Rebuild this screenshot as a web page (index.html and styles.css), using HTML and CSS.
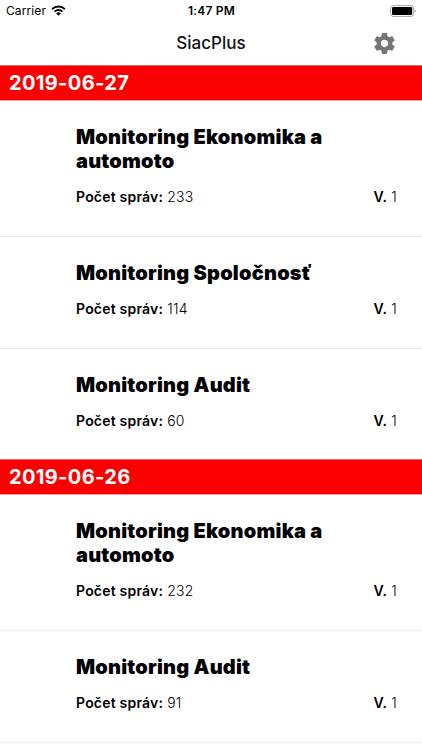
FILE: index.html
```html
<!DOCTYPE html>
<html lang="sk">
<head>
  <meta charset="UTF-8">
  <meta name="viewport" content="width=device-width, initial-scale=1.0">
  <title>SiacPlus</title>
  <link rel="stylesheet" href="styles.css">
</head>
<body>
  <!-- Status Bar -->
  <div class="status-bar">
    <div class="carrier">
      <span>Carrier</span>
      <svg class="wifi" viewBox="0 0 15 11" width="15" height="11">
        <path d="M1.1 4.1a9.2 9.2 0 0 1 12.8 0" fill="none" stroke="#000" stroke-width="2"/>
        <path d="M3.5 6.6a5.8 5.8 0 0 1 8 0" fill="none" stroke="#000" stroke-width="1.8"/>
        <path d="M7.5 10.7 5.2 8.4a3.3 3.3 0 0 1 4.6 0z"/>
      </svg>
    </div>
    <span class="time">1:47 PM</span>
    <div class="battery">
      <svg viewBox="0 0 27 12" width="27" height="12">
        <rect x="0.6" y="0.6" width="23" height="10.8" rx="2.6" fill="#fff" stroke="#a5a5a5"/>
        <rect x="2" y="2" width="20.2" height="8" rx="1.3"/>
        <path d="M24.8 4.2a2 2 0 0 1 0 3.6z" fill="#a5a5a5"/>
      </svg>
    </div>
  </div>

  <!-- Navigation Bar -->
  <header>
    <h1>SiacPlus</h1>
    <a href="#" class="settings" aria-label="Nastavenia">
      <svg viewBox="0 0 24 24" width="25" height="25">
        <path d="M19.43 12.98c.04-.32.07-.64.07-.98s-.03-.66-.07-.98l2.11-1.65c.19-.15.24-.42.12-.64l-2-3.46c-.12-.22-.39-.3-.61-.22l-2.49 1c-.52-.4-1.08-.73-1.69-.98l-.38-2.65C14.46 2.18 14.25 2 14 2h-4c-.25 0-.46.18-.49.42l-.38 2.65c-.61.25-1.17.59-1.69.98l-2.49-1c-.23-.09-.49 0-.61.22l-2 3.46c-.13.22-.07.49.12.64l2.11 1.65c-.04.32-.07.65-.07.98s.03.66.07.98l-2.11 1.65c-.19.15-.24.42-.12.64l2 3.46c.12.22.39.3.61.22l2.49-1c.52.4 1.08.73 1.69.98l.38 2.65c.03.24.24.42.49.42h4c.25 0 .46-.18.49-.42l.38-2.65c.61-.25 1.17-.59 1.69-.98l2.49 1c.23.09.49 0 .61-.22l2-3.46c.12-.22.07-.49-.12-.64l-2.11-1.65zM12 15.5c-1.93 0-3.5-1.57-3.5-3.5s1.57-3.5 3.5-3.5 3.5 1.57 3.5 3.5-1.57 3.5-3.5 3.5z"/>
      </svg>
    </a>
  </header>

  <!-- Monitoring List -->
  <main>
    <section>
      <h2>2019-06-27</h2>
      <article class="item">
        <h3>Monitoring Ekonomika a automoto</h3>
        <div class="info">
          <p><b>Počet správ:</b> 233</p>
          <p><b>V.</b> 1</p>
        </div>
      </article>
      <article class="item">
        <h3>Monitoring Spoločnosť</h3>
        <div class="info">
          <p><b>Počet správ:</b> 114</p>
          <p><b>V.</b> 1</p>
        </div>
      </article>
      <article class="item last">
        <h3>Monitoring Audit</h3>
        <div class="info">
          <p><b>Počet správ:</b> 60</p>
          <p><b>V.</b> 1</p>
        </div>
      </article>
    </section>

    <section>
      <h2>2019-06-26</h2>
      <article class="item">
        <h3>Monitoring Ekonomika a automoto</h3>
        <div class="info">
          <p><b>Počet správ:</b> 232</p>
          <p><b>V.</b> 1</p>
        </div>
      </article>
      <article class="item">
        <h3>Monitoring Audit</h3>
        <div class="info">
          <p><b>Počet správ:</b> 91</p>
          <p><b>V.</b> 1</p>
        </div>
      </article>
    </section>
  </main>
</body>
</html>
```
FILE: styles.css
```css
* {
  margin: 0;
  padding: 0;
  box-sizing: border-box;
}

body {
  background-color: #fff;
  color: #000;
  font-family: Inter, 'Liberation Sans', sans-serif;
  height: 100vh;
  overflow: hidden;
}

/* Status Bar */
.status-bar {
  display: grid;
  grid-template-columns: 1fr auto 1fr;
  align-items: center;
  height: 21px;
  padding: 0 5px 0 6px;
  font-size: 12px;
}

.carrier {
  display: flex;
  align-items: center;
  gap: 5px;
}

.carrier span {
  letter-spacing: 0.1px;
}

.time {
  font-weight: 600;
  letter-spacing: 0.2px;
}

.battery {
  display: flex;
  justify-content: flex-end;
}

/* Navigation Bar */
header {
  display: grid;
  grid-template-columns: 1fr auto 1fr;
  align-items: center;
  height: 44px;
  padding: 0 25px;
}

header h1 {
  grid-column: 2;
  font-size: 17px;
  font-weight: 500;
  color: #111;
}

.settings {
  display: flex;
  justify-content: flex-end;
}

.settings svg {
  fill: #757575;
}

/* Monitoring List */
h2 {
  height: 36px;
  padding-left: 9px;
  border-top: 1px solid #d66;
  border-bottom: 1px solid #f99;
  background-color: #fb0000;
  color: #fff;
  font-size: 20px;
  font-weight: 700;
  line-height: 35px;
  letter-spacing: 0.35px;
}

.item {
  padding: 24px 25px 28px 76px;
  border-bottom: 1px solid #e8e8e8;
}

.item.last {
  padding-bottom: 27px;
  border-bottom: none;
}

.item h3 {
  font-size: 20px;
  font-weight: 900;
  line-height: 24px;
  letter-spacing: 0.2px;
}

.info {
  display: flex;
  justify-content: space-between;
  margin-top: 12px;
  font-size: 14px;
  font-weight: 300;
  line-height: 23px;
  letter-spacing: 0.2px;
}

.info b {
  font-weight: 600;
}
```
